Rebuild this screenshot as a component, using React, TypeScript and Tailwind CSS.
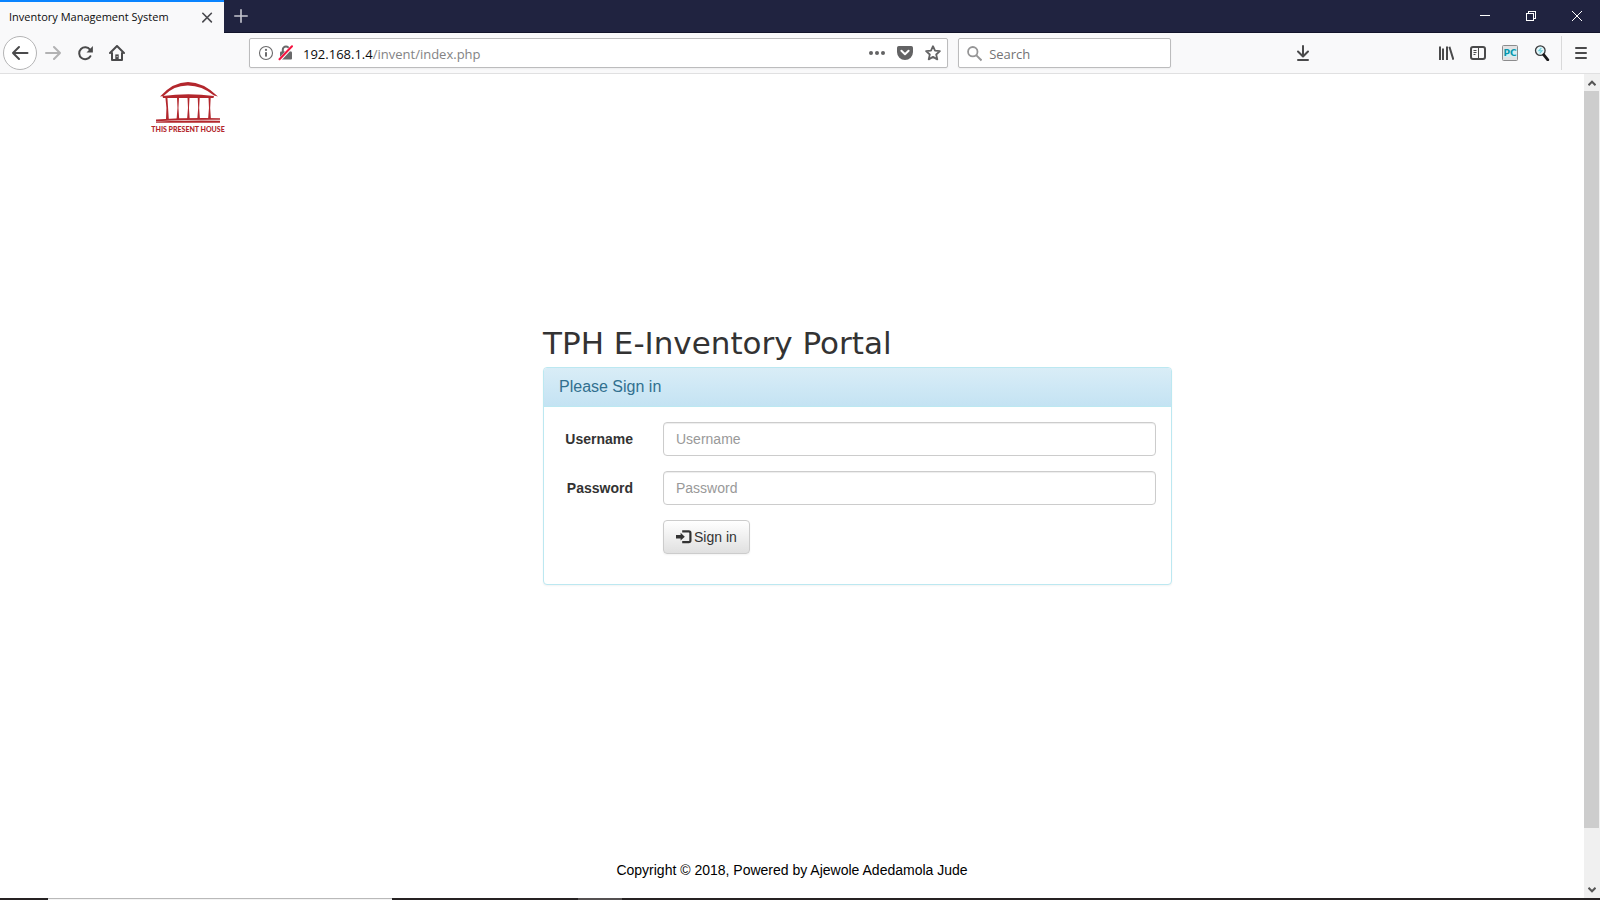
import React, { type ReactNode } from "react";

const chromeFont = "font-['Open_Sans','Noto_Sans',sans-serif]";

function ToolButton({ label, children }: { label: string; children: ReactNode }) {
  return (
    <button type="button" aria-label={label} className="flex h-8 w-8 shrink-0 items-center justify-center text-[#4a4a4b]">
      {children}
    </button>
  );
}

function WindowButton({ label, children }: { label: string; children: ReactNode }) {
  return (
    <button type="button" aria-label={label} className="flex w-[46px] items-center justify-center text-white">
      {children}
    </button>
  );
}

function TitleBar() {
  return (
    <header className="flex h-[33px] shrink-0 bg-[#202340]">
      <div className="flex w-56 items-center justify-between border-t-2 border-[#0a84ff] bg-[#f9f9fa] pr-[9px] pl-[9px] text-[11px] text-[#0c0c0d]">
        <span className="whitespace-nowrap">Inventory Management System</span>
        <button type="button" aria-label="Close tab" className="flex h-4 w-4 items-center justify-center">
          <svg width="16" height="16" viewBox="0 0 16 16" fill="none" stroke="#4a4a4f" strokeWidth="1.6" strokeLinecap="round">
            <path d="M3.8 3.3l8.6 8.6M12.4 3.3l-8.6 8.6" />
          </svg>
        </button>
      </div>
      <div className="flex flex-1 items-center justify-between border-b border-[#12142b]">
        <button type="button" aria-label="New tab" className="flex w-[34px] items-center justify-center">
          <svg width="16" height="16" viewBox="0 0 16 16" fill="none" stroke="#c6c7d0" strokeWidth="1.6" strokeLinecap="round">
            <path d="M8 1.8v12.4M1.8 8h12.4" />
          </svg>
        </button>
        <div className="flex h-full">
          <WindowButton label="Minimize">
            <svg width="10" height="10" viewBox="0 0 10 10" stroke="currentColor" shapeRendering="crispEdges">
              <path d="M0 4.5h10" />
            </svg>
          </WindowButton>
          <WindowButton label="Restore">
            <svg width="10" height="10" viewBox="0 0 10 10" fill="none" stroke="currentColor" shapeRendering="crispEdges">
              <path d="M.5 2.5h7v7h-7zM2.5 2.5v-2h7v7h-2" />
            </svg>
          </WindowButton>
          <WindowButton label="Close">
            <svg width="10" height="10" viewBox="0 0 10 10" fill="none" stroke="currentColor">
              <path d="M0 0l10 10M10 0L0 10" />
            </svg>
          </WindowButton>
        </div>
      </div>
    </header>
  );
}

function AddressBar() {
  return (
    <div className="flex h-[30px] min-w-0 flex-1 items-center rounded-xs border border-[#bcbcbd] bg-white pr-[6px] pl-2 shadow-xs">
      <svg width="16" height="16" viewBox="0 0 16 16" className="shrink-0">
        <circle cx="8" cy="8" r="6.5" fill="none" stroke="#6a6a6b" strokeWidth="1.1" />
        <circle cx="8" cy="4.9" r="1.1" fill="#6a6a6b" />
        <rect x="7" y="7" width="2" height="4.8" rx=".8" fill="#6a6a6b" />
      </svg>
      <svg width="16" height="16" viewBox="0 0 16 16" className="ml-1 shrink-0">
        <path d="M4.8 7V4.6a3.2 3.2 0 0 1 6.4 0V7" fill="none" stroke="#69696a" strokeWidth="2" />
        <rect x="2" y="6.6" width="12" height="8" rx="1" fill="#69696a" />
        <path d="M1.6 14.8L14.2 1.4" stroke="#fff" strokeWidth="3.4" />
        <path d="M1.5 14.2L14 1.2" stroke="#f5123f" strokeWidth="2" strokeLinecap="round" />
      </svg>
      <div className="ml-[9px] flex-1 truncate pt-[2px] text-[13px] leading-5">
        <span className="text-[#0c0c0d]">192.168.1.4</span>
        <span className="text-[#838384]">/invent/index.php</span>
      </div>
      <div className="flex items-center gap-3">
        <button type="button" aria-label="Page actions">
          <svg width="16" height="16" viewBox="0 0 16 16" fill="#636364" className="block">
            <circle cx="2" cy="8" r="2" />
            <circle cx="8" cy="8" r="2" />
            <circle cx="14" cy="8" r="2" />
          </svg>
        </button>
        <button type="button" aria-label="Save to Pocket">
          <svg width="16" height="16" viewBox="0 0 16 16" className="block">
            <path d="M1.8 1h12.4A1.8 1.8 0 0 1 16 2.8V7A8 8 0 0 1 0 7V2.8A1.8 1.8 0 0 1 1.8 1z" fill="#636364" />
            <path d="M4.4 5.8L8 9.2l3.6-3.4" fill="none" stroke="#fff" strokeWidth="2" strokeLinecap="round" strokeLinejoin="round" />
          </svg>
        </button>
        <button type="button" aria-label="Bookmark this page">
          <svg width="16" height="16" viewBox="0 0 16 16" className="block" fill="none" stroke="#636364" strokeWidth="1.8" strokeLinejoin="round">
            <path d="M8 1.2l2 4.5 4.9.5-3.7 3.3 1.1 4.9L8 11.9l-4.3 2.5 1.1-4.9L1.1 6.2 6 5.7z" />
          </svg>
        </button>
      </div>
    </div>
  );
}

function Toolbar() {
  return (
    <nav className="flex h-[41px] shrink-0 items-center border-b border-[#e0e0e1] bg-[#f9f9fa] pr-[3px] pl-[3px]">
      <button type="button" aria-label="Back" className="flex h-[34px] w-[34px] shrink-0 items-center justify-center rounded-full border border-[#b4b4b5] bg-white">
        <svg width="18" height="16" viewBox="0 0 18 16" fill="none" stroke="#4a4a4b" strokeWidth="2" strokeLinecap="round" strokeLinejoin="round">
          <path d="M16.5 8H2M8 2L2 8l6 6" />
        </svg>
      </button>
      <ToolButton label="Forward">
        <svg width="16" height="16" viewBox="0 0 16 16" fill="none" stroke="#b2b2b3" strokeWidth="2" strokeLinecap="round" strokeLinejoin="round">
          <path d="M1 8h14M9 2l6 6-6 6" />
        </svg>
      </ToolButton>
      <ToolButton label="Reload">
        <svg width="16" height="16" viewBox="0 0 16 16" fill="none" stroke="currentColor" strokeWidth="2" strokeLinecap="round">
          <path d="M13.4 11.2A6 6 0 1 1 13 4.6" />
          <path d="M15.9 1v6.4H9.5z" fill="currentColor" stroke="none" />
        </svg>
      </ToolButton>
      <ToolButton label="Home">
        <svg width="16" height="16" viewBox="0 0 16 16" fill="none" stroke="currentColor" strokeWidth="2" strokeLinecap="round" strokeLinejoin="round">
          <path d="M1 8l7-7 7 7" />
          <path d="M3 8v7h10V8" />
          <path d="M6.3 15V9.4h3.4V15z" fill="currentColor" stroke="none" />
          <path d="M8 11.6h.2" stroke="#f9f9fa" strokeWidth="1" />
        </svg>
      </ToolButton>
      <div className="w-[116px] shrink-0" />
      <AddressBar />
      <label className="ml-[10px] flex h-[30px] w-[213px] shrink-0 items-center rounded-xs border border-[#bcbcbd] bg-white pl-2 shadow-xs">
        <svg width="17" height="17" viewBox="0 0 17 17" fill="none" stroke="#959596" strokeWidth="2">
          <circle cx="6.5" cy="6.5" r="5.3" />
          <path d="M10.3 10.3l6 6" strokeWidth="2.2" />
        </svg>
        <input aria-label="Search" placeholder="Search" className="ml-[7px] w-full min-w-0 pt-[2px] text-[13px] leading-5 outline-none placeholder:text-[#737374]" />
      </label>
      <div className="w-[116px] shrink-0" />
      <ToolButton label="Downloads">
        <svg width="16" height="16" viewBox="0 0 16 16" fill="none" stroke="currentColor" strokeWidth="2" strokeLinecap="round" strokeLinejoin="round">
          <path d="M8 1v10M3 6.5l5 5 5-5M3 15h10" />
        </svg>
      </ToolButton>
      <div className="w-[111px] shrink-0" />
      <ToolButton label="Library">
        <svg width="16" height="16" viewBox="0 0 16 16" fill="none" stroke="currentColor" strokeWidth="2">
          <path d="M2 1.5V15M5 3.5V15M9 1.5V15M11.4 1.8L15.4 14.8" />
        </svg>
      </ToolButton>
      <ToolButton label="Sidebars">
        <svg width="16" height="16" viewBox="0 0 16 16" fill="none" stroke="currentColor">
          <rect x="1" y="2" width="14" height="12" rx="2" strokeWidth="2" />
          <path d="M8.5 2v12M3.5 5.5h3M3.5 7.5h3M3.5 9.5h2" strokeWidth="1" />
        </svg>
      </ToolButton>
      <ToolButton label="PC">
        <svg width="16" height="16" viewBox="0 0 16 16">
          <rect x=".5" y=".5" width="15" height="15" rx="1" fill="#e2e2e3" stroke="#8c8c8d" />
          <rect x="1" y="4" width="14" height="8" fill="#d4eef2" />
          <text x="8" y="11.2" textAnchor="middle" fontSize="9" fontWeight="700" fill="#0796ab" className="font-['DejaVu_Sans',sans-serif]">PC</text>
        </svg>
      </ToolButton>
      <ToolButton label="Inspect">
        <svg width="16" height="16" viewBox="0 0 16 16" fill="none">
          <circle cx="6.3" cy="5.6" r="4.8" fill="#e4f7fa" stroke="#39393a" strokeWidth="1.3" />
          <path d="M7.4 2.8L4.8 5.8h3.2L5.6 8.4" stroke="#6accda" strokeWidth="1.1" />
          <path d="M9.8 9.8l4 5" stroke="#1a1a1b" strokeWidth="2.8" strokeLinecap="round" />
        </svg>
      </ToolButton>
      <div className="ml-[3px] h-[34px] w-px shrink-0 bg-[#d9d9da]" />
      <div className="ml-[3px]">
        <ToolButton label="Open menu">
          <svg width="16" height="16" viewBox="0 0 16 16" stroke="currentColor" strokeWidth="2" strokeLinecap="round">
            <path d="M3 3h10M3 8h10M3 13h10" />
          </svg>
        </ToolButton>
      </div>
    </nav>
  );
}

function Logo() {
  return (
    <a href="#" className="flex w-[76px] flex-col items-center text-[#b3272d]">
      <svg width="66" height="43" viewBox="0 0 66 43" fill="currentColor" aria-hidden="true">
        <path d="M5 16.5Q18 2 33 2T63 16.5L59 15.6Q47 5.8 33 5.6T8.5 16z" />
        <path d="M7.5 16q26-3.4 51.500 0l-.5 2H8z" />
        <path d="M10.400 17.500h2l1.400 21.500H11q1.200-11-.600-21.500zM22 17.500h2q-1.200 11 .2 21.500h-2.600q1.600-11 .4-21.500zM32.500 17.500h2q-1.200 11 .2 21.500h-2.600q1.600-11 .4-21.500zM42.700 17.500h2q-1.200 11 .2 21.500h-2.600q1.600-11 .4-21.500zM53.500 17.500h2.200q-1.200 11 .2 21.500h-2.800q1.600-11 .4-21.500z" />
        <path d="M1 39.400q32-1.800 64-1.200v1.600Q33 39.600 1 41.200z" />
        <path d="M1 41.600Q33 40.200 65 40.800v1.900H1z" />
      </svg>
      <span className="mt-[2px] text-[7px] leading-[9px] font-black whitespace-nowrap font-['Lato',sans-serif]">THIS PRESENT HOUSE</span>
    </a>
  );
}

const fields = [
  { id: "username", label: "Username", type: "text" },
  { id: "password", label: "Password", type: "password" },
];

function SignIn() {
  return (
    <section className="w-full max-w-[629px]">
      <h2 className="mb-[6px] text-[31px] leading-9 font-['Verdana','DejaVu_Sans',sans-serif]">TPH E-Inventory Portal</h2>
      <div className="rounded-sm border border-[#bce8f1] bg-white shadow-xs">
        <div className="rounded-t-[3px] border-b border-[#bce8f1] bg-linear-to-b from-[#d9edf7] to-[#c4e3f3] px-[15px] py-[10px]">
          <h3 className="text-base leading-[18px] text-[#31708f]">Please Sign in</h3>
        </div>
        <form className="flex flex-col gap-[15px] px-[15px] pt-[15px] pb-[30px]" onSubmit={(event) => event.preventDefault()}>
          {fields.map((field) => (
            <div key={field.id} className="flex items-center gap-[30px]">
              <label htmlFor={field.id} className="w-[74px] shrink-0 text-right font-bold">{field.label}</label>
              <input
                id={field.id}
                type={field.type}
                placeholder={field.label}
                className="h-[34px] min-w-0 flex-1 rounded-sm border border-[#ccc] bg-white px-3 shadow-[inset_0_1px_1px_rgba(0,0,0,0.075)] outline-none placeholder:text-[#999]"
              />
            </div>
          ))}
          <button
            type="submit"
            className="ml-[104px] flex h-[34px] items-center gap-[2px] self-start rounded-sm border border-[#ccc] bg-linear-to-b from-white to-[#e0e0e0] px-3 shadow-xs"
          >
            <svg width="16" height="14" viewBox="0 0 16 14" aria-hidden="true">
              <path d="M0 5h4.600V2.800L8.800 6.700 4.600 10.600V8.400H0z" fill="currentColor" />
              <path d="M6.200 1.400h6.600q1.600 0 1.600 1.600v7.600q0 1.600-1.600 1.600H6.200" fill="none" stroke="currentColor" strokeWidth="2.2" />
            </svg>
            Sign in
          </button>
        </form>
      </div>
    </section>
  );
}

function Scrollbar() {
  return (
    <div className="flex w-4 shrink-0 flex-col bg-[#f0f0f0]" aria-hidden="true">
      <div className="flex h-[17px] items-center justify-center">
        <svg width="8" height="6" viewBox="0 0 8 6" fill="none" stroke="#555" strokeWidth="2">
          <path d="M.5 5.2L4 1.7l3.5 3.5" />
        </svg>
      </div>
      <div className="mr-px flex-[737] bg-[#cdcdcd]" />
      <div className="flex-[53]" />
      <div className="flex h-[17px] items-center justify-center">
        <svg width="8" height="6" viewBox="0 0 8 6" fill="none" stroke="#555" strokeWidth="2">
          <path d="M.5 .8L4 4.3 7.5.8" />
        </svg>
      </div>
    </div>
  );
}

export default function App() {
  return (
    <div className={"flex min-h-screen flex-col bg-white " + chromeFont}>
      <TitleBar />
      <Toolbar />
      <div className="flex flex-1">
        <div className="flex flex-1 flex-col text-sm leading-5 text-[#333] font-['Liberation_Sans',Arial,sans-serif]">
          <main className="mx-auto w-full max-w-[1284px] pt-[6px]">
            <Logo />
            <div className="mt-[191px] pl-[393px]">
              <SignIn />
            </div>
          </main>
          <footer className="mt-auto pb-[18px] text-center text-black">Copyright © 2018, Powered by Ajewole Adedamola Jude</footer>
        </div>
        <Scrollbar />
      </div>
      <div className="flex h-[2px] shrink-0 bg-[#262223]" aria-hidden="true">
        <div className="ml-12 w-[344px] border-t border-[#b9b9b9] bg-[#f4f4f4]" />
        <div className="ml-[186px] w-11 bg-[#555152]" />
      </div>
    </div>
  );
}
